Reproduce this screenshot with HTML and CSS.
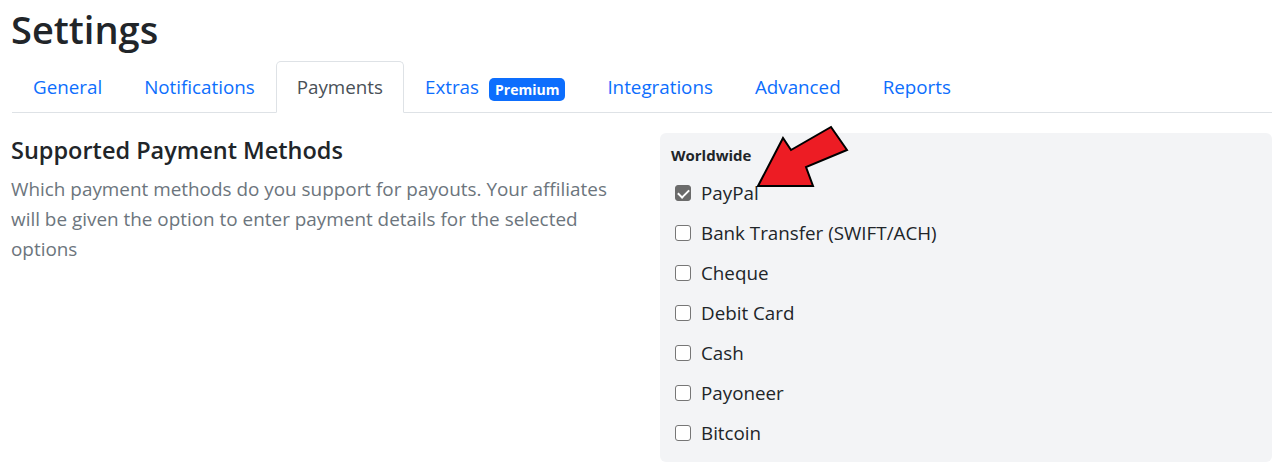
FILE: index.html
```html
<!DOCTYPE html>
<html lang="en">
<head>
<meta charset="utf-8">
<title>Settings</title>
<link rel="stylesheet" href="styles.css">
</head>
<body>
<div class="page">
  <h1 class="title">Settings</h1>
  <ul class="tabs">
    <li><a class="tab">General</a></li>
    <li><a class="tab">Notifications</a></li>
    <li><a class="tab active">Payments</a></li>
    <li><a class="tab">Extras <span class="badge">Premium</span></a></li>
    <li><a class="tab">Integrations</a></li>
    <li><a class="tab">Advanced</a></li>
    <li><a class="tab">Reports</a></li>
  </ul>
  <div class="row">
    <div class="col-left">
      <h4 class="section-title">Supported Payment Methods</h4>
      <p class="section-desc">Which payment methods do you support for payouts. Your affiliates will be given the option to enter payment details for the selected options</p>
    </div>
    <div class="panel">
      <div class="panel-title">Worldwide</div>
      <label class="check"><input type="checkbox" checked><span>PayPal</span></label>
      <label class="check"><input type="checkbox"><span>Bank Transfer (SWIFT/ACH)</span></label>
      <label class="check"><input type="checkbox"><span>Cheque</span></label>
      <label class="check"><input type="checkbox"><span>Debit Card</span></label>
      <label class="check"><input type="checkbox"><span>Cash</span></label>
      <label class="check"><input type="checkbox"><span>Payoneer</span></label>
      <label class="check"><input type="checkbox"><span>Bitcoin</span></label>
    </div>
  </div>
  <svg class="arrow" width="105" height="72" viewBox="0 0 105 72">
    <polygon points="8,65 33,17 41,29 81,6 97,29 56,46 63,65" fill="#ed1c24" stroke="#000" stroke-width="2" stroke-linejoin="miter"/>
  </svg>
</div>
</body>
</html>
```
FILE: styles.css
```css
* { box-sizing: border-box; }
html, body { margin: 0; padding: 0; background: #fff; }
body {
  font-family: "Open Sans", "Noto Sans", sans-serif;
  color: #212529;
}
.page {
  position: relative;
  padding: 0 5px 0 11px;
}
.title {
  margin: 3px 0 0 0;
  font-size: 38px;
  line-height: 52px;
  font-weight: 600;
  color: #212529;
}
.tabs {
  list-style: none;
  margin: 6px 0 0 1px;
  padding: 0;
  display: flex;
  border-bottom: 1px solid #dee2e6;
}
.tabs li { margin-bottom: -1px; }
.tab {
  display: flex;
  align-items: center;
  padding: 10px 20px;
  line-height: 30px;
  font-size: 18.8px;
  color: #0d6efd;
  border: 1px solid transparent;
  border-top-left-radius: 5px;
  border-top-right-radius: 5px;
}
.tab.active {
  color: #495057;
  background: #fff;
  border-color: #dee2e6 #dee2e6 #fff;
}
.badge {
  margin-left: 10px;
  background: #0d6efd;
  color: #fff;
  font-size: 14px;
  font-weight: 700;
  line-height: 23px;
  padding: 0 6px;
  border-radius: 5px;
  position: relative;
  top: 2px;
}
.row {
  display: grid;
  grid-template-columns: 1fr 612px;
  column-gap: 24px;
  margin-top: 20px;
}
.col-left { padding-top: 3px; }
.section-title {
  margin: 0;
  font-size: 23.5px;
  line-height: 28px;
  font-weight: 600;
  color: #212529;
}
.section-desc {
  margin: 10px 0 0 0;
  font-size: 18.9px;
  line-height: 30px;
  color: #6c757d;
}
.panel {
  background: #f3f4f6;
  border-radius: 6px;
  padding: 12px 11px 9px 11px;
  display: flex;
  flex-direction: column;
}
.panel-title {
  font-size: 15px;
  font-weight: 700;
  line-height: 20px;
  margin-bottom: 8px;
}
.check {
  display: flex;
  align-items: center;
  height: 40px;
  padding-left: 4px;
  font-size: 18.8px;
  color: #212529;
}
.check input {
  appearance: none;
  -webkit-appearance: none;
  width: 16px;
  height: 16px;
  margin: 0 10px 0 0;
  border: 1px solid #767676;
  border-radius: 3px;
  background: #fff;
  position: relative;
  flex: none;
}
.check input:checked {
  background: #6b6b6b;
  border-color: #6b6b6b;
}
.check input:checked::after {
  content: "";
  position: absolute;
  left: 4px;
  top: 1px;
  width: 5px;
  height: 9px;
  border: solid #fff;
  border-width: 0 2.5px 2.5px 0;
  transform: rotate(45deg);
}
.arrow {
  position: absolute;
  left: 750px;
  top: 118px;
}
```
